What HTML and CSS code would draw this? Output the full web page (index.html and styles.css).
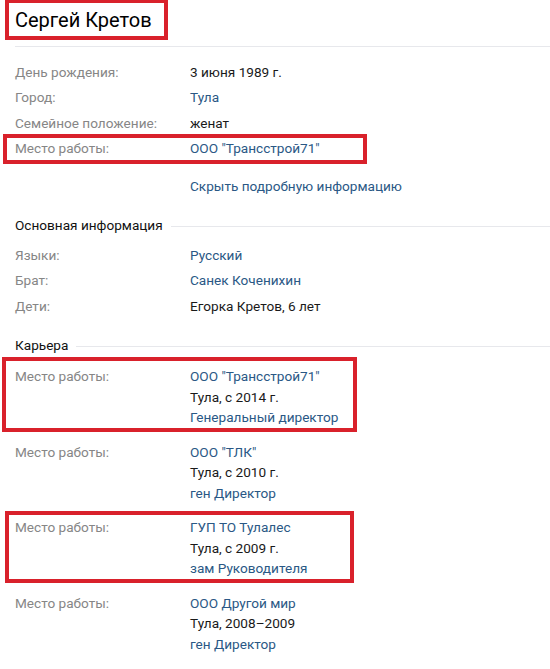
FILE: index.html
```html
<!DOCTYPE html>
<html lang="ru">
<head>
<meta charset="utf-8">
<title>Сергей Кретов</title>
<link rel="stylesheet" href="styles.css">
</head>
<body>
<div class="page">
  <div class="header">
    <h1 class="name mark mark-name">Сергей Кретов</h1>
  </div>

  <div class="info">
    <div class="row"><div class="label">День рождения:</div><div class="value">3 июня 1989 г.</div></div>
    <div class="row"><div class="label">Город:</div><div class="value link">Тула</div></div>
    <div class="row"><div class="label">Семейное положение:</div><div class="value">женат</div></div>
    <div class="row mark mark-work"><div class="label">Место работы:</div><div class="value link">ООО "Трансстрой71"</div></div>
  </div>

  <div class="more"><span class="link">Скрыть подробную информацию</span></div>

  <div class="section section-main">
    <div class="section-title"><span>Основная информация</span></div>
    <div class="rows">
      <div class="row"><div class="label">Языки:</div><div class="value link">Русский</div></div>
      <div class="row"><div class="label">Брат:</div><div class="value link">Санек Коченихин</div></div>
      <div class="row"><div class="label">Дети:</div><div class="value">Егорка Кретов, 6 лет</div></div>
    </div>
  </div>

  <div class="section section-career">
    <div class="section-title"><span>Карьера</span></div>
    <div class="jobs">
      <div class="job mark mark-job1">
        <div class="label">Место работы:</div>
        <div class="value">
          <div class="link">ООО "Трансстрой71"</div>
          <div>Тула, с 2014 г.</div>
          <div class="link">Генеральный директор</div>
        </div>
      </div>
      <div class="job">
        <div class="label">Место работы:</div>
        <div class="value">
          <div class="link">ООО "ТЛК"</div>
          <div>Тула, с 2010 г.</div>
          <div class="link">ген Директор</div>
        </div>
      </div>
      <div class="job mark mark-job3">
        <div class="label">Место работы:</div>
        <div class="value">
          <div class="link">ГУП ТО Тулалес</div>
          <div>Тула, с 2009 г.</div>
          <div class="link">зам Руководителя</div>
        </div>
      </div>
      <div class="job">
        <div class="label">Место работы:</div>
        <div class="value">
          <div class="link">ООО Другой мир</div>
          <div>Тула, 2008–2009</div>
          <div class="link">ген Директор</div>
        </div>
      </div>
    </div>
  </div>
</div>
</body>
</html>
```

FILE: styles.css
```css
html, body {
  margin: 0;
  padding: 0;
  background: #ffffff;
}

body {
  font-family: Roboto, "Open Sans", "Liberation Sans", sans-serif;
  font-size: 13.6px;
  color: #000000;
}

.page {
  padding-left: 15px;
  width: 535px;
}

/* header */
.header {
  padding-top: 8px;
  padding-bottom: 14px;
  border-bottom: 1px solid #e7e8ec;
}

.name {
  display: inline-block;
  margin: 0;
  font-size: 20px;
  font-weight: 400;
  line-height: 24px;
  color: #000;
}

/* annotation frames drawn over the content */
.mark {
  position: relative;
}

.mark::after {
  content: "";
  position: absolute;
  box-sizing: border-box;
  border: 4px solid #d9212b;
  pointer-events: none;
}

.mark-name::after {
  left: -10px;
  top: -9px;
  width: 163px;
  height: 41px;
}

.mark-work::after {
  left: -12px;
  top: -2px;
  width: 364px;
  height: 30px;
}

.mark-job1::after {
  left: -13px;
  top: -2px;
  width: 355px;
  height: 75px;
}

.mark-job3::after {
  left: -10px;
  top: 1px;
  width: 349px;
  height: 72px;
}

/* rows */
.info {
  padding-top: 13px;
}

.row {
  display: grid;
  grid-template-columns: 175px 1fr;
  padding: 3px 0;
  line-height: 19.33px;
}

.label {
  color: #868686;
}

.value {
  color: #1a1a1a;
}

.link {
  color: #2a5885;
}

.more {
  padding-top: 15.6px;
  padding-left: 175px;
  line-height: 19.33px;
}

/* sections */
.section-main {
  padding-top: 19.6px;
}

.section-career {
  padding-top: 17px;
}

.section-title {
  display: flex;
  align-items: center;
  line-height: 19.33px;
  color: #111;
}

.section-title::after {
  content: "";
  flex: 1;
  height: 1px;
  margin-left: 8px;
  margin-top: 2px;
  background: #e7e8ec;
}

.rows {
  padding-top: 7.7px;
}

.jobs {
  padding-top: 4px;
}

.job {
  display: grid;
  grid-template-columns: 175px 1fr;
  padding: 7px 0;
  line-height: 20.5px;
}
```
